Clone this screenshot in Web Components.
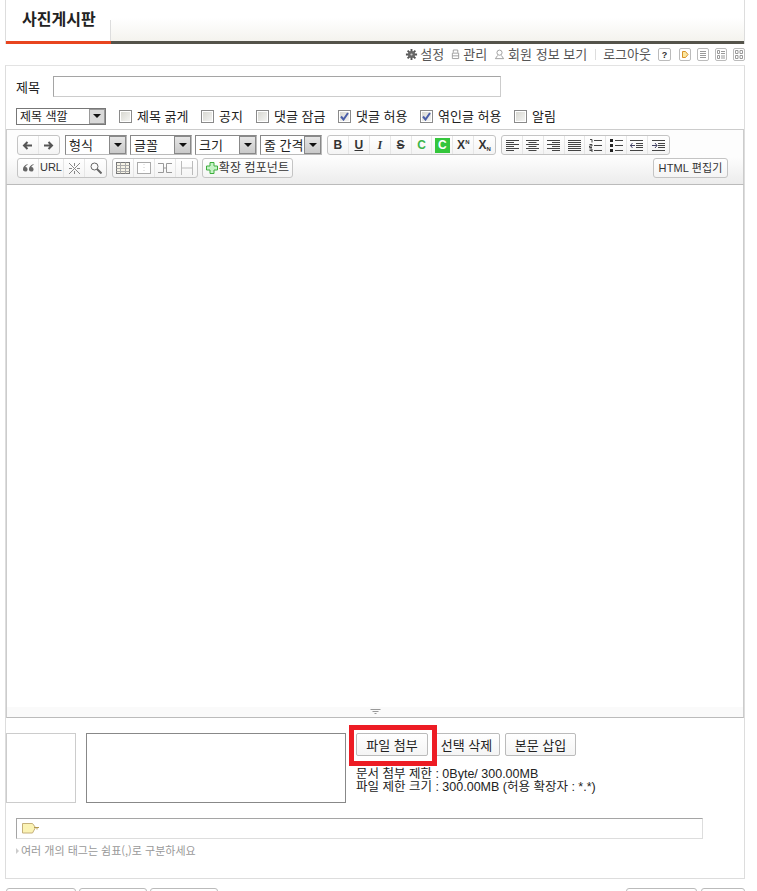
<!DOCTYPE html>
<html lang="ko"><head><meta charset="utf-8"><title>사진게시판</title>
<style>
html,body{margin:0;height:891px;overflow:hidden;background:#fff;}
body{font:13px/1.2 "Noto Sans CJK KR","Liberation Sans",sans-serif;color:#222;}
</style></head><body>
<board-page>
  <board-header slot="header">사진게시판</board-header>
  <user-menu slot="menu"></user-menu>
  <write-form slot="form"></write-form>
  <form-actions slot="actions"></form-actions>
</board-page>
<template id="t-page"><style>
:host{display:block;width:740px;margin-left:5px;}
</style><slot name="header"></slot><slot name="menu"></slot><slot name="form"></slot><slot name="actions"></slot></template>

<template id="t-header"><style>
:host{display:block;height:44px;border-left:1px solid #ddd;border-right:1px solid #ddd;box-sizing:border-box;background:linear-gradient(#fff 0,#fff 18px,#f4f3ee 41px);}
.tab{width:105px;height:41px;box-sizing:border-box;background:linear-gradient(#ddd,#ddd) right 20px/1px 21px no-repeat,#fff;padding:8px 0 0 16px;font-weight:700;font-size:16px;line-height:20px;color:#222;}
.line{height:3px;background:#54534a;}
.line i{display:block;width:105px;height:3px;background:#e8451f;}
</style><div class="tab"><slot></slot></div><div class="line"><i></i></div></template>

<template id="t-menu"><style>
:host{display:flex;justify-content:flex-end;align-items:center;height:21px;box-sizing:border-box;padding-bottom:1px;font-size:13px;color:#555;white-space:nowrap;}
.it{display:flex;align-items:center;}
svg{display:block;flex:none;}
.sep{width:1px;height:11px;background:#ddd;margin:0 7px 0 8px;}
.ic{display:flex;align-items:center;gap:6px;margin-left:7px;padding-top:1px;}
</style>
<span class="it" style="margin-right:7px;gap:2px"><svg width="13" height="13" viewBox="0 0 14 14"><g stroke="#555" stroke-width="2"><path d="M7 1v12M1 7h12M2.800 2.800l8.400 8.400M11.200 2.800l-8.400 8.400"/></g><circle cx="7" cy="7" r="3.800" fill="#666"/><circle cx="7" cy="7" r="1.200" fill="#ccc"/></svg><span>설정</span></span>
<span class="it" style="margin-right:7px;gap:3px"><svg width="9" height="11" viewBox="0 0 10 12" fill="none" stroke="#999"><path d="M2.500 1v3M7.500 1v3M2.500 1h5M1.500 4.500h7v6h-7zM1.500 7.500h7"/></svg><span>관리</span></span>
<span class="it" style="gap:3px"><svg width="11" height="11" viewBox="0 0 12 12" fill="none" stroke="#999"><circle cx="6" cy="4" r="2.800"/><path d="M4 7L1.500 10.500h9L8 7"/></svg><span>회원 정보 보기</span></span>
<i class="sep"></i><span>로그아웃</span>
<span class="ic">
<svg width="13" height="13" viewBox="0 0 13 13"><rect x=".5" y=".5" width="12" height="12" rx="1.500" fill="#fff" stroke="#bbb"/><text x="6.500" y="10" font-size="9" font-weight="700" text-anchor="middle" fill="#333" font-family="Liberation Sans">?</text></svg>
<svg width="12" height="13" viewBox="0 0 12 13" style="margin-left:2px"><rect x=".5" y=".5" width="11" height="12" rx="1.500" fill="#fff" stroke="#bbb"/><path d="M3.500 3.500h3l2.500 3-2.500 3h-3z" fill="#fbe7a0" stroke="#d8932a"/></svg>
<svg width="12" height="13" viewBox="0 0 12 13" fill="none" stroke="#999"><rect x=".5" y=".5" width="11" height="12" rx="1.500" stroke="#bbb"/><path d="M3 3.500h6M3 5.500h6M3 7.500h6M3 9.500h6"/></svg>
<svg width="12" height="13" viewBox="0 0 12 13" fill="none" stroke="#999"><rect x=".5" y=".5" width="11" height="12" rx="1.500" stroke="#bbb"/><path d="M2.500 2.500h2v3h-2zM2.500 7.500h2v3h-2zM6 3.500h4M6 5.500h4M6 8h4M6 10h4"/></svg>
<svg width="12" height="13" viewBox="0 0 12 13" fill="none" stroke="#999"><rect x=".5" y=".5" width="11" height="12" rx="1.500" stroke="#bbb"/><path d="M2.500 2.500h2.500v3H2.500zM7 2.500h2.500v3H7zM2.500 7.500h2.500v3H2.500zM7 7.500h2.500v3H7z"/></svg>
</span></template>

<template id="t-form"><style>
:host{display:block;height:814px;box-sizing:border-box;border:1px solid #ddd;border-top-color:#e3e3e3;}
.title{display:flex;align-items:center;height:21px;margin:10px 0 0 10px;gap:12px;}
.title label{width:25px;color:#222;}
.title i{display:block;width:448px;height:21px;box-sizing:border-box;border:1px solid #ccc;border-top-color:#a5a5a5;border-left-color:#a5a5a5;}
.opts{display:flex;align-items:center;height:18px;margin:10px 0 0 10px;}
.sel{width:90px;height:17px;box-sizing:border-box;border:1px solid #777;display:flex;align-items:center;justify-content:space-between;font-size:12px;padding-left:3px;margin-right:13px;color:#222;}
.sel b{display:flex;align-items:center;justify-content:center;width:16px;height:15px;box-sizing:border-box;background:#d9d9d9;border:1px solid #999;}
.sel b::after{content:"";border:4px solid transparent;border-top:4px solid #111;border-bottom:0;}
</style>
<div class="title"><label>제목</label><i></i></div>
<div class="opts"><span class="sel"><span>제목 색깔</span><b></b></span>
<opt-check style="--w:82px">제목 굵게</opt-check><opt-check style="--w:55px">공지</opt-check><opt-check style="--w:82px">댓글 잠금</opt-check><opt-check checked style="--w:82px">댓글 허용</opt-check><opt-check checked style="--w:94px">엮인글 허용</opt-check><opt-check>알림</opt-check></div>
<rich-editor></rich-editor>
<file-area></file-area>
<tag-input></tag-input></template>

<template id="t-check"><style>
:host{display:flex;align-items:center;width:var(--w,auto);font-size:13px;color:#222;white-space:nowrap;}
.b{width:13px;height:13px;box-sizing:border-box;border:1px solid #8a8a8a;background:#fff;padding:1px;margin-right:5px;display:block;flex:none;}
.b i{display:block;width:9px;height:9px;background:linear-gradient(135deg,#d8d8d2,#f4f4f2);}
svg{display:block;}
svg[hidden]{display:none;}
</style><span class="b"><i><svg id="m" width="9" height="9" viewBox="0 0 9 9" hidden><path d="M1 4.500l2.500 3L8 1" fill="none" stroke="#4a5ea8" stroke-width="2"/></svg></i></span><slot></slot></template>

<template id="t-editor"><style>
:host{display:block;margin-top:4px;}
.tb{width:738px;height:56px;box-sizing:border-box;border:1px solid #ccc;border-bottom-color:#bbb;background:linear-gradient(#fdfdfd 50%,#ececec);padding:5px 15px 0 10px;}
.row{display:flex;align-items:center;height:20px;gap:3px;margin-bottom:3px;}
.gap2{margin-left:2px}
.body{width:738px;height:522px;box-sizing:border-box;border:1px solid #ccc;border-width:0 1px;background:#fff;}
.grip{width:738px;height:11px;box-sizing:border-box;border:1px solid #ccc;border-top:0;border-bottom-color:#bbb;background:#fafafa;display:flex;justify-content:center;align-items:center;}
.end{margin-left:auto}
svg{display:block}
.t{font-weight:700;font-size:12px}
sup,sub{font-size:6px;line-height:0;}
sup{vertical-align:5px}sub{vertical-align:-2px}
.low{padding-top:1px}
</style>
<div class="tb">
<div class="row">
<tb-group style="--bw:20.5px"><tb-btn><svg width="11" height="11" viewBox="0 0 11 11" fill="none" stroke="#555" stroke-width="2"><path d="M10 5.500H2M5.500 2L2 5.500 5.500 9"/></svg></tb-btn><tb-btn><svg width="11" height="11" viewBox="0 0 11 11" fill="none" stroke="#555" stroke-width="2"><path d="M1 5.500h8M5.500 2L9 5.500 5.500 9"/></svg></tb-btn></tb-group>
<tb-select class="gap2">형식</tb-select><tb-select>글꼴</tb-select><tb-select>크기</tb-select><tb-select>줄 간격</tb-select>
<tb-group class="gap2" style="--bw:20.9px"><tb-btn><span class="t">B</span></tb-btn><tb-btn><span class="t" style="text-decoration:underline">U</span></tb-btn><tb-btn><span class="t" style="font-style:italic;font-family:'Liberation Serif'">I</span></tb-btn><tb-btn><span class="t" style="text-decoration:line-through">S</span></tb-btn><tb-btn><span class="t" style="color:#3cb54a">C</span></tb-btn><tb-btn><span class="t" style="display:block;width:15px;height:15px;line-height:15px;background:#34c63c;color:#fff;text-align:center">C</span></tb-btn><tb-btn><span class="t">X<sup>N</sup></span></tb-btn><tb-btn><span class="t">X<sub>N</sub></span></tb-btn></tb-group>
<tb-group class="gap2" style="--bw:20.8px">
<tb-btn><svg width="13" height="11" viewBox="0 0 13 11" stroke="#444"><path d="M0 .5h13M0 2.500h8M0 4.500h13M0 6.500h8M0 8.500h13M0 10.500h8"/></svg></tb-btn>
<tb-btn><svg width="13" height="11" viewBox="0 0 13 11" stroke="#444"><path d="M0 .5h13M2.500 2.500h8M0 4.500h13M2.500 6.500h8M0 8.500h13M2.500 10.500h8"/></svg></tb-btn>
<tb-btn><svg width="13" height="11" viewBox="0 0 13 11" stroke="#444"><path d="M0 .5h13M5 2.500h8M0 4.500h13M5 6.500h8M0 8.500h13M5 10.500h8"/></svg></tb-btn>
<tb-btn><svg width="13" height="11" viewBox="0 0 13 11" stroke="#444"><path d="M0 .5h13M0 2.500h13M0 4.500h13M0 6.500h13M0 8.500h13M0 10.500h13"/></svg></tb-btn>
<tb-btn><svg width="13" height="13" viewBox="0 0 13 13" stroke="#444" fill="none"><path d="M5 1.500h8M5 6.500h8M5 11.500h8M1 .5h2v3M.5 5.500h2.500v1.500h-2.500v1.500h2.500M.5 10h2.500v3M.5 11.500h2.500"/></svg></tb-btn>
<tb-btn><svg width="13" height="13" viewBox="0 0 13 13" fill="#222"><path d="M0 0h3v3H0zM0 5h3v3H0zM0 10h3v3H0z"/><path d="M5 1.500h8M5 6.500h8M5 11.500h8" stroke="#444"/></svg></tb-btn>
<tb-btn><svg width="13" height="11" viewBox="0 0 13 11" stroke="#444" fill="none"><path d="M0 .5h13M6 3.500h7M6 5.500h7M6 7.500h7M0 10.500h13"/><path d="M5 5.500H0M2.500 3L.5 5.500l2 2.500" stroke="#446"/></svg></tb-btn>
<tb-btn><svg width="13" height="11" viewBox="0 0 13 11" stroke="#444" fill="none"><path d="M0 .5h13M6 3.500h7M6 5.500h7M6 7.500h7M0 10.500h13"/><path d="M0 5.500h5M3 3l2 2.500L3 8" stroke="#446"/></svg></tb-btn>
</tb-group>
</div>
<div class="row">
<tb-group>
<tb-btn><svg width="11" height="8" viewBox="0 0 11 8" fill="#666"><path d="M4.500 0C1.500 1 0 3 0 5a2.300 2.300 0 1 0 2.300-2c.3-.8 1.200-1.600 2.200-2zM10.500 0C7.500 1 6 3 6 5a2.300 2.300 0 1 0 2.300-2c.3-.8 1.200-1.600 2.200-2z"/></svg></tb-btn>
<tb-btn style="--bw:25px;font-size:11px">URL</tb-btn>
<tb-btn><svg width="13" height="13" viewBox="0 0 13 13" stroke="#888" fill="none"><path d="M1 1l11 11M12 1L1 12M6.500 1v3M6.500 9v3M1 6.500h3M9 6.500h3"/></svg></tb-btn>
<tb-btn><svg width="12" height="12" viewBox="0 0 12 12" fill="none" stroke="#666"><circle cx="4.500" cy="4.500" r="3.500"/><path d="M7 7l4.500 4.500" stroke-width="2"/></svg></tb-btn>
</tb-group>
<tb-group class="gap2">
<tb-btn><svg width="14" height="12" viewBox="0 0 14 12" fill="#f6f3e6" stroke="#777"><rect x=".5" y=".5" width="13" height="11"/><path d="M.5 3.500h13M.5 6.500h13M.5 9.500h13M4.500 .5v11M9.500 .5v11" stroke="#aaa"/></svg></tb-btn>
<tb-btn><svg width="14" height="12" viewBox="0 0 14 12" fill="#fff" stroke="#aaa"><rect x=".5" y=".5" width="13" height="11"/><path d="M7 2v1M7 5v1M7 8v1" stroke="#ccc"/></svg></tb-btn>
<tb-btn><svg width="14" height="12" viewBox="0 0 14 12" fill="none" stroke="#999"><path d="M0 1.500h5.500v9H0M14 1.500H8.500v9H14M5.500 6h3"/></svg></tb-btn>
<tb-btn><svg width="14" height="14" viewBox="0 0 14 14" fill="none" stroke="#bbb"><path d="M1.500 0v14M12.500 0v14M1.500 7h11"/></svg></tb-btn>
</tb-group>
<tb-group class="gap2" style="margin-left:1px"><tb-btn style="--bw:89px;gap:1px;font-size:12px;letter-spacing:.1px"><svg width="12" height="12" viewBox="0 0 12 12" fill="#c6f2c6" stroke="#3cae3c"><path d="M4 .5h4v3.500h3.500v4H8v3.500H4V8H.5V4H4z"/></svg><span class="low">확장 컴포넌트</span></tb-btn></tb-group>
<tb-group class="end"><tb-btn style="--bw:73px;font-size:11px;letter-spacing:.1px"><span class="low">HTML 편집기</span></tb-btn></tb-group>
</div>
</div>
<div class="body"></div>
<div class="grip"><svg width="11" height="6" viewBox="0 0 11 6" stroke="#999"><path d="M.5 .5h10M2.500 2.500h6M4.500 4.500h2"/></svg></div></template>

<template id="t-group"><style>
:host{display:flex;height:20px;box-sizing:border-box;border:1px solid #c4c4c4;border-radius:3px;background:linear-gradient(#fff,#f4f4f4);overflow:hidden;}
</style><slot></slot></template>
<template id="t-btn"><style>
:host{display:flex;align-items:center;justify-content:center;width:var(--bw,21px);height:18px;box-sizing:border-box;font-family:"Liberation Sans","Noto Sans CJK KR",sans-serif;font-size:11px;color:#333;white-space:nowrap;flex:none;border-right:1px solid #e6e6e6;}
:host(:last-child){border-right:0;}
</style><slot></slot></template>
<template id="t-tbsel"><style>
:host{display:flex;align-items:center;justify-content:space-between;width:62px;height:20px;box-sizing:border-box;border:1px solid #bbb;border-color:#888 #bbb #bbb #888;background:#fff;padding-left:3px;font-size:13px;color:#222;white-space:nowrap;}
b{display:flex;align-items:center;justify-content:center;width:17px;height:18px;flex:none;box-sizing:border-box;background:linear-gradient(#e5e5e5,#c9c9c9);border:1px solid #888;}
b::after{content:"";border:4px solid transparent;border-top:4px solid #111;border-bottom:0;}
</style><span><slot></slot></span><b></b></template>

<template id="t-file"><style>
:host{display:flex;margin:15px 0 0 0;height:70px;position:relative;}
.p{width:70px;height:70px;box-sizing:border-box;border:1px solid #ccc;margin-right:10px;}
.l{width:260px;height:70px;box-sizing:border-box;border:1px solid #888;margin-right:10px;}
.r{display:flex;flex-direction:column;}
.btns{display:flex;gap:5px;height:23px;}
.info{margin-top:12px;font:12.5px/13px "Liberation Sans","Noto Sans CJK KR",sans-serif;color:#222;white-space:nowrap;}
.mark{position:absolute;left:343px;top:-8px;width:88px;height:41px;box-sizing:border-box;border:5px solid #ed1c24;pointer-events:none;}
</style><div class="p"></div><div class="l"></div>
<div class="r"><div class="btns"><act-btn style="width:72px">파일 첨부</act-btn><act-btn style="width:67px">선택 삭제</act-btn><act-btn style="width:71px">본문 삽입</act-btn></div>
<div class="info">문서 첨부 제한 : 0Byte/ 300.00MB<br>파일 제한 크기 : 300.00MB (허용 확장자 : *.*)</div></div>
<div class="mark"></div></template>

<template id="t-act"><style>
:host{display:flex;align-items:center;justify-content:center;height:23px;box-sizing:border-box;border:1px solid #bbb;border-radius:2px;background:linear-gradient(#fff,#f4f4f4);font-size:13px;color:#222;white-space:nowrap;}
</style><slot></slot></template>

<template id="t-tag"><style>
:host{display:block;margin:15px 0 0 10px;}
.i{width:687px;height:21px;box-sizing:border-box;border:1px solid #ddd;border-top-color:#a5a5a5;border-left-color:#a5a5a5;display:flex;align-items:center;padding-left:5px;}
.h{display:flex;align-items:center;gap:2px;margin-top:4px;height:15px;font-size:11px;color:#999;white-space:nowrap;}
.h i{border:3px solid transparent;border-left:3px solid #ccc;border-right:0;}
svg{display:block}
</style><div class="i"><svg width="18" height="11" viewBox="0 0 18 11"><path d="M.5 .5h10l3 4-3 5.500h-10z" fill="#fbf3b5" stroke="#c5b07a"/><path d="M12 4.500h5M15 4.500v2" stroke="#b39a50" fill="none"/></svg></div>
<div class="h"><i></i><span>여러 개의 태그는 쉼표(,)로 구분하세요</span></div></template>

<template id="t-actions"><style>
:host{display:flex;height:20px;margin-top:9px;margin-left:1px;width:739px;}
b{display:block;height:20px;box-sizing:border-box;border:1px solid #bbb;border-radius:3px;margin-right:3px;}
.s{flex:1}
</style><b style="width:70px"></b><b style="width:68px"></b><b style="width:68px"></b><span class="s"></span><b style="width:71px;margin-right:4px"></b><b style="width:44px;margin-right:0"></b></template>

<script>
const defs={ 'board-page':'t-page','board-header':'t-header','user-menu':'t-menu','write-form':'t-form','rich-editor':'t-editor','tb-group':'t-group','tb-btn':'t-btn','tb-select':'t-tbsel','file-area':'t-file','act-btn':'t-act','tag-input':'t-tag','form-actions':'t-actions'};
for(const [n,t] of Object.entries(defs)){customElements.define(n,class extends HTMLElement{constructor(){super();this.attachShadow({mode:'open'}).append(document.getElementById(t).content.cloneNode(true));}});}
customElements.define('opt-check',class extends HTMLElement{constructor(){super();const s=this.attachShadow({mode:'open'});s.append(document.getElementById('t-check').content.cloneNode(true));if(this.hasAttribute('checked'))s.getElementById('m').removeAttribute('hidden');}});
</script>
</body></html>
